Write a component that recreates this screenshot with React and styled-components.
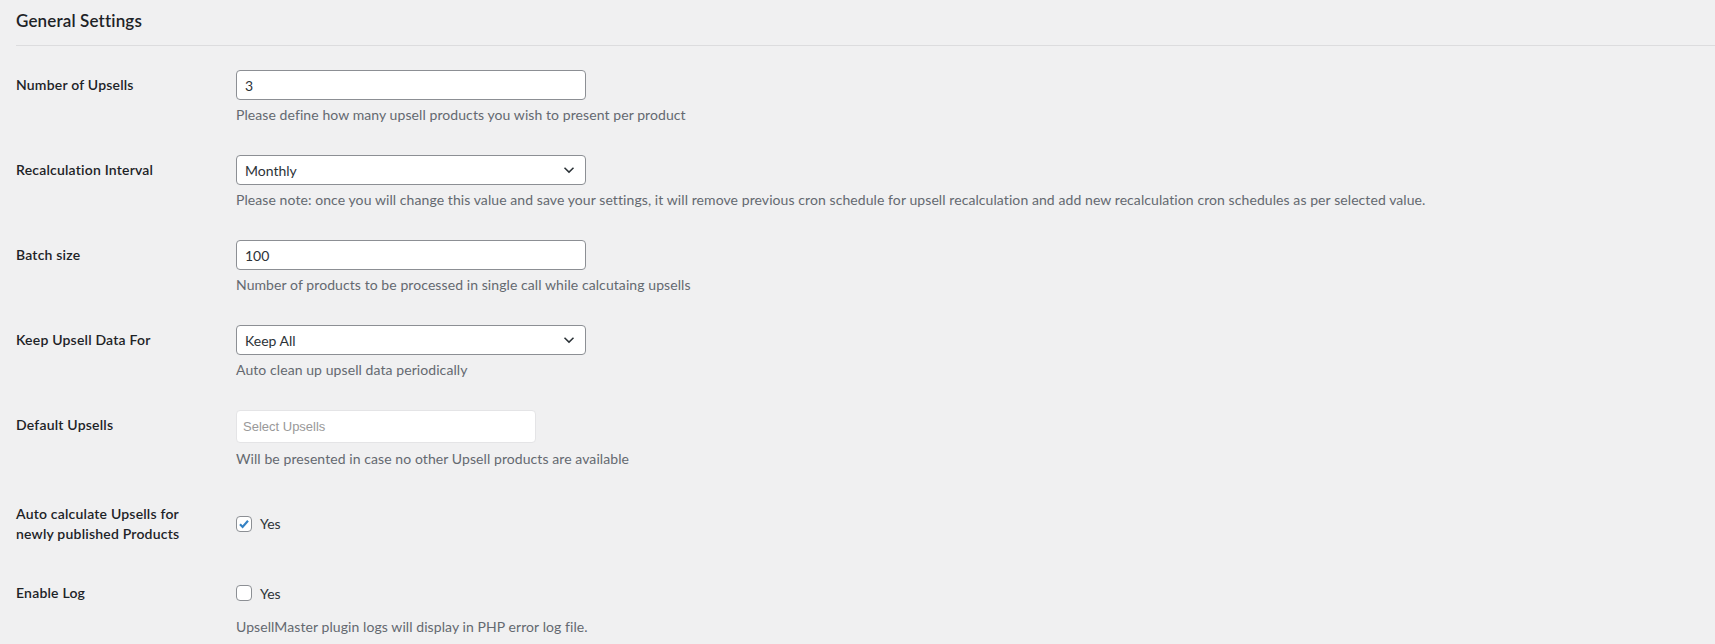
import styled, { createGlobalStyle } from "styled-components";

const GlobalStyle = createGlobalStyle`
  html, body {
    margin: 0;
    padding: 0;
    background: #f0f0f1;
  }
  body {
    font-family: Lato, "Liberation Sans", sans-serif;
    font-size: 14px;
    color: #1d2327;
  }
`;

const Wrap = styled.div`
  padding-left: 16px;
`;

const Title = styled.h2`
  margin: 0;
  padding: 10px 0 13px;
  font-size: 17px;
  font-weight: 600;
  line-height: 1.3;
  letter-spacing: 0.15px;
  color: #1d2327;
  border-bottom: 1px solid #dcdcde;
`;

const FormTable = styled.div`
  margin-top: 9px;
`;

const Row = styled.div`
  display: grid;
  grid-template-columns: 210px 1fr;
`;

const Th = styled.div`
  align-self: start;
  padding: 20px 10px 20px 0;
  font-weight: 600;
  line-height: 1.4;
  letter-spacing: 0.2px;
  color: #1d2327;
`;

const Td = styled.div`
  align-self: center;
  padding: 15px 10px;
`;

const TextInput = styled.div`
  box-sizing: border-box;
  width: 350px;
  height: 30px;
  padding: 0 8px;
  display: flex;
  align-items: center;
  background: #fff;
  border: 1px solid #8c8f94;
  border-radius: 4px;
  font-size: 14px;
  color: #2c3338;
`;

const Select = styled(TextInput)`
  justify-content: space-between;
  padding: 0 10px 0 8px;
`;

const Chevron = () => (
  <svg width="12" height="8" viewBox="0 0 12 8">
    <path d="M1.5 1.8l4.5 4.3 4.5-4.3" fill="none" stroke="#2c3338" strokeWidth="1.5" />
  </svg>
);

const MultiSelect = styled.div`
  box-sizing: border-box;
  width: 300px;
  height: 33px;
  padding: 0 6px;
  display: flex;
  align-items: center;
  background: #fff;
  border: 1px solid #e4e4e6;
  border-radius: 4px;
`;

const Placeholder = styled.span`
  font-family: "Liberation Sans", Arial, sans-serif;
  font-size: 13px;
  color: #999;
`;

const Description = styled.p`
  margin: ${(p) => p.$gap || 4}px 0 0;
  line-height: 21px;
  font-size: 14px;
  letter-spacing: 0.08px;
  color: #646970;
`;

const CheckLine = styled.label`
  height: 30px;
  display: flex;
  align-items: center;
  gap: 8px;
  color: #2c3338;
`;

const Box = styled.span`
  box-sizing: border-box;
  width: 16px;
  height: 16px;
  display: flex;
  align-items: center;
  justify-content: center;
  background: #fff;
  border: 1px solid #8c8f94;
  border-radius: 4px;
`;

const Checkbox = ({ checked }) => (
  <Box>
    {checked && (
      <svg width="12" height="12" viewBox="0 0 12 12">
        <path d="M2 6.2l2.6 2.7L10 2.8" fill="none" stroke="#3582c4" strokeWidth="2.2" />
      </svg>
    )}
  </Box>
);

export default function App() {
  return (
    <>
      <GlobalStyle />
      <Wrap>
        <Title>General Settings</Title>
        <FormTable>
          <Row>
            <Th>Number of Upsells</Th>
            <Td>
              <TextInput>3</TextInput>
              <Description>Please define how many upsell products you wish to present per product</Description>
            </Td>
          </Row>
          <Row>
            <Th>Recalculation Interval</Th>
            <Td>
              <Select>
                Monthly
                <Chevron />
              </Select>
              <Description>
                Please note: once you will change this value and save your settings, it will remove previous cron schedule for upsell recalculation and add new recalculation cron schedules as per selected value.
              </Description>
            </Td>
          </Row>
          <Row>
            <Th>Batch size</Th>
            <Td>
              <TextInput>100</TextInput>
              <Description>Number of products to be processed in single call while calcutaing upsells</Description>
            </Td>
          </Row>
          <Row>
            <Th>Keep Upsell Data For</Th>
            <Td>
              <Select>
                Keep All
                <Chevron />
              </Select>
              <Description>Auto clean up upsell data periodically</Description>
            </Td>
          </Row>
          <Row>
            <Th>Default Upsells</Th>
            <Td>
              <MultiSelect>
                <Placeholder>Select Upsells</Placeholder>
              </MultiSelect>
              <Description $gap={5}>Will be presented in case no other Upsell products are available</Description>
            </Td>
          </Row>
          <Row>
            <Th>
              Auto calculate Upsells for
              <br />
              newly published Products
            </Th>
            <Td>
              <CheckLine>
                <Checkbox checked />
                Yes
              </CheckLine>
            </Td>
          </Row>
          <Row>
            <Th>Enable Log</Th>
            <Td>
              <CheckLine>
                <Checkbox />
                Yes
              </CheckLine>
              <Description $gap={8}>UpsellMaster plugin logs will display in PHP error log file.</Description>
            </Td>
          </Row>
        </FormTable>
      </Wrap>
    </>
  );
}
